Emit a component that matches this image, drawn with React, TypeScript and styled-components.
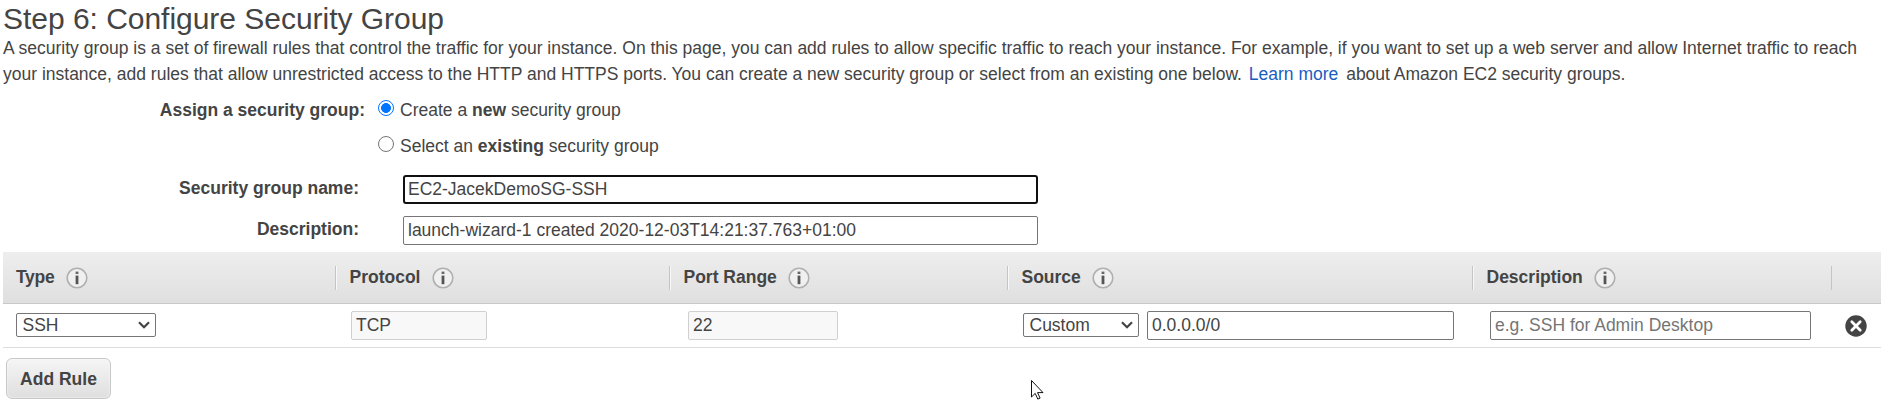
import React from "react";
import styled, { createGlobalStyle } from "styled-components";

const GlobalStyle = createGlobalStyle`
  * { box-sizing: border-box; }
  body {
    margin: 0;
    background: #fff;
    color: #444;
    font-family: "Liberation Sans", Arial, sans-serif;
    font-size: 17.5px;
  }
  input, select, button { font: inherit; color: inherit; margin: 0; }
`;

const Page = styled.main`
  position: relative;
  width: 1891px;
  height: 410px;
  overflow: hidden;
  padding: 0 10px 0 3px;
`;

const Title = styled.h1`
  margin: 0;
  padding-top: 1px;
  height: 35px;
  font-size: 30px;
  font-weight: 400;
  line-height: 35px;
  letter-spacing: -0.03px;
`;

const Intro = styled.p`
  margin: 0;
  height: 52px;
  line-height: 26px;
  white-space: nowrap;
`;

const IntroLine = styled.span`
  display: block;
`;

const Link = styled.a`
  margin: 0 3px 0 2px;
  color: #1a5dbf;
  text-decoration: none;
`;

const Form = styled.div`
  height: 165px;
  padding-top: 9px;
`;

const FormRow = styled.div<{ $height: number }>`
  display: flex;
  align-items: flex-start;
  height: ${(p) => p.$height}px;
`;

const FormLabel = styled.div<{ $width: number; $gap: number; $tall?: boolean }>`
  flex: none;
  width: ${(p) => p.$width}px;
  margin-right: ${(p) => p.$gap}px;
  line-height: ${(p) => (p.$tall ? 29 : 27)}px;
  font-weight: 700;
  text-align: right;
`;

const RadioLabel = styled.label`
  display: flex;
  gap: 6px;
  line-height: 29px;
`;

const Radio = styled.input`
  appearance: none;
  flex: none;
  width: 16px;
  height: 16px;
  margin-top: 4px !important;
  border: 1px solid #767676;
  border-radius: 50%;
  background: #fff;
  &:checked {
    border: 1.3px solid #0075ff;
    background: radial-gradient(circle, #0075ff 4.6px, #fff 5.2px);
  }
`;

const Field = styled.input<{ $width: number; $active?: boolean }>`
  flex: none;
  width: ${(p) => p.$width}px;
  height: 29px;
  padding: ${(p) => (p.$active ? "0 3px" : "0 4px")};
  border: ${(p) => (p.$active ? "2px solid #101010" : "1px solid #767676")};
  border-radius: ${(p) => (p.$active ? 3 : 2)}px;
  background: #fff;
  outline: none;
  &:disabled {
    border-color: #d0d0d0;
    background: #f8f8f8;
    color: #444;
  }
  &::placeholder { color: #757575; opacity: 1; }
`;

const Table = styled.div`
  width: 1878px;
`;

const columns = "332px 334px 338px 465px 359px 1fr";

const HeaderRow = styled.div`
  display: grid;
  grid-template-columns: ${columns};
  height: 52px;
  padding-top: 14px;
  border-bottom: 1px solid #c8c8c8;
  background: linear-gradient(#eeeeee, #dfdfdf);
`;

const HeaderCell = styled.div`
  display: flex;
  height: 24px;
  padding-left: 13.5px;
  border-left: 1px solid #c4c4c4;
  box-shadow: inset 1px 0 #f8f8f8;
  font-weight: 700;
  line-height: 22px;
  &:first-child {
    padding-left: 13px;
    border-left: none;
    box-shadow: none;
    letter-spacing: -0.3px;
  }
  &:last-child { box-shadow: none; }
`;

const InfoSvg = styled.svg`
  display: block;
  flex: none;
  margin: 1px 0 0 11.5px;
`;

const RuleRow = styled.div`
  display: grid;
  grid-template-columns: ${columns};
  height: 44px;
  border-bottom: 1px solid #ddd;
`;

const RuleCell = styled.div<{ $left: number }>`
  display: flex;
  align-items: flex-start;
  padding: 7px 0 0 ${(p) => p.$left}px;
`;

const SelectBox = styled.div<{ $width: number; $after?: number }>`
  display: flex;
  align-items: center;
  justify-content: space-between;
  flex: none;
  width: ${(p) => p.$width}px;
  height: 24px;
  margin: 2px ${(p) => p.$after ?? 0}px 0 0;
  padding: 0 5px 0 5.5px;
  border: 1px solid #767676;
  border-radius: 2px;
  background: #fff;
  line-height: 22px;
`;

const RemoveButton = styled.button`
  display: block;
  width: 22px;
  height: 22px;
  margin-top: 4px;
  padding: 0;
  border: 0;
  background: none;
`;

const AddButton = styled.button`
  display: block;
  width: 105px;
  height: 41px;
  margin: 10px 0 0 3px;
  padding: 1px 0 0;
  border: 1px solid #c8c8c8;
  border-radius: 6px;
  background: linear-gradient(#f5f5f5, #dfdfdf);
  box-shadow: inset 0 0 2px #fff;
  font-weight: 700;
  text-align: center;
`;

const Pointer = styled.svg`
  position: absolute;
  left: 1031px;
  top: 380px;
`;

const InfoIcon = () => (
  <InfoSvg width="22" height="22" viewBox="0 0 22 22">
    <circle cx="11" cy="11" r="9.8" fill="#f0f0f0" stroke="#b0b0b0" strokeWidth="1.6" />
    <rect x="9.6" y="4.6" width="2.8" height="2.4" fill="#666" />
    <rect x="9.6" y="8.6" width="2.8" height="8.6" fill="#555" />
  </InfoSvg>
);

const Chevron = () => (
  <svg width="12" height="8" viewBox="0 0 12 8">
    <path d="M1 1.2 6 6.2 11 1.2" fill="none" stroke="#444" strokeWidth="2.2" />
  </svg>
);

const headings = ["Type", "Protocol", "Port Range", "Source", "Description"];

export default function App() {
  return (
    <Page>
      <GlobalStyle />
      <Title>Step 6: Configure Security Group</Title>
      <Intro>
        <IntroLine>
          A security group is a set of firewall rules that control the traffic for your instance. On this page, you can
          add rules to allow specific traffic to reach your instance. For example, if you want to set up a web server
          and allow Internet traffic to reach
        </IntroLine>
        <IntroLine>
          your instance, add rules that allow unrestricted access to the HTTP and HTTPS ports. You can create a new
          security group or select from an existing one below. <Link>Learn more</Link> about Amazon EC2 security groups.
        </IntroLine>
      </Intro>
      <Form>
        <FormRow $height={36}>
          <FormLabel $width={362} $gap={13} $tall>Assign a security group:</FormLabel>
          <RadioLabel>
            <Radio type="radio" name="group" defaultChecked />
            <span>Create a <b>new</b> security group</span>
          </RadioLabel>
        </FormRow>
        <FormRow $height={43}>
          <FormLabel $width={362} $gap={13} />
          <RadioLabel>
            <Radio type="radio" name="group" />
            <span>Select an <b>existing</b> security group</span>
          </RadioLabel>
        </FormRow>
        <FormRow $height={41}>
          <FormLabel $width={356} $gap={44}>Security group name:</FormLabel>
          <Field $width={635} $active defaultValue="EC2-JacekDemoSG-SSH" />
        </FormRow>
        <FormRow $height={29}>
          <FormLabel $width={356} $gap={44}>Description:</FormLabel>
          <Field $width={635} defaultValue="launch-wizard-1 created 2020-12-03T14:21:37.763+01:00" />
        </FormRow>
      </Form>
      <Table>
        <HeaderRow>
          {headings.map((heading) => (
            <HeaderCell key={heading}>
              {heading}
              <InfoIcon />
            </HeaderCell>
          ))}
          <HeaderCell />
        </HeaderRow>
        <RuleRow>
          <RuleCell $left={13}>
            <SelectBox $width={140}>SSH<Chevron /></SelectBox>
          </RuleCell>
          <RuleCell $left={16}>
            <Field $width={136} disabled defaultValue="TCP" />
          </RuleCell>
          <RuleCell $left={19}>
            <Field $width={150} disabled defaultValue="22" />
          </RuleCell>
          <RuleCell $left={16}>
            <SelectBox $width={116} $after={8}>Custom<Chevron /></SelectBox>
            <Field $width={307} defaultValue="0.0.0.0/0" />
          </RuleCell>
          <RuleCell $left={18}>
            <Field $width={321} placeholder="e.g. SSH for Admin Desktop" />
          </RuleCell>
          <RuleCell $left={14}>
            <RemoveButton aria-label="Remove rule">
              <svg width="22" height="22" viewBox="0 0 22 22">
                <circle cx="11" cy="11" r="10.7" fill="#444" />
                <path d="M6.8 6.8 15.2 15.2M15.2 6.8 6.8 15.2" stroke="#fff" strokeWidth="2.8" strokeLinecap="round" />
              </svg>
            </RemoveButton>
          </RuleCell>
        </RuleRow>
      </Table>
      <AddButton>Add Rule</AddButton>
      <Pointer width="13" height="20" viewBox="0 0 13 20">
        <path d="M.5.5V17l3.7-3.6 2.6 5.7 2.3-1-2.6-5.5H12Z" fill="#fff" stroke="#111" />
      </Pointer>
    </Page>
  );
}
